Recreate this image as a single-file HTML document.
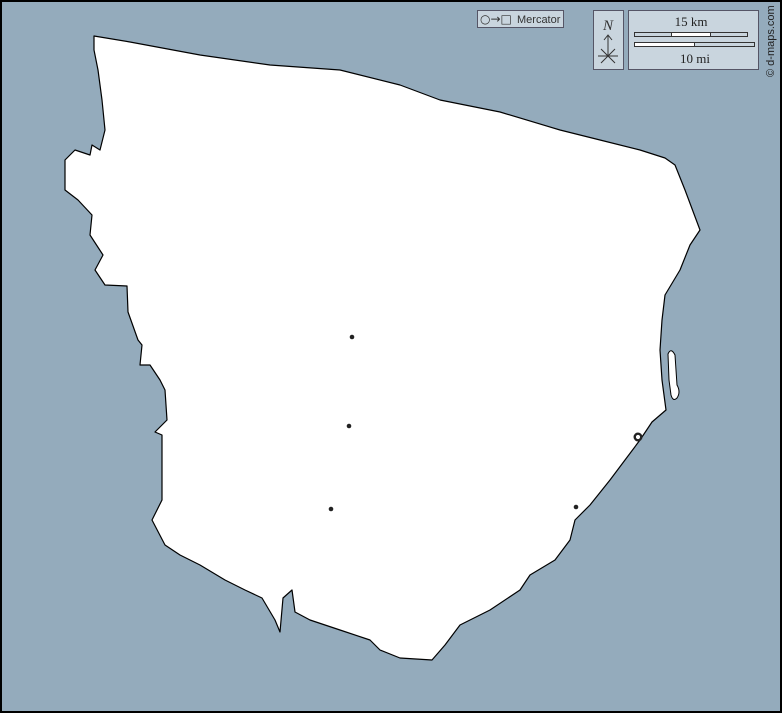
<!DOCTYPE html>
<html><head><style>
html,body{margin:0;padding:0;width:782px;height:713px;overflow:hidden;background:#94abbc}
</style></head><body>
<svg width="782" height="713" viewBox="0 0 782 713" xmlns="http://www.w3.org/2000/svg" style="position:absolute;left:0;top:0">
<rect x="1" y="1" width="780" height="711" fill="#94abbc" stroke="#000" stroke-width="2"/>
<polygon fill="#fff" stroke="#000" stroke-width="1.2" stroke-linejoin="round" points="94,36 130,42 200,55 270,65 340,70 400,85 440,100 500,112 560,130 600,140 640,150 665,158 675,165 685,190 700,230 690,245 680,270 665,295 662,320 660,350 662,380 666,410 652,422 640,440 625,460 610,480 590,505 575,520 570,540 555,560 530,575 520,590 490,610 460,625 445,645 432,660 400,658 380,650 370,640 340,630 310,620 295,612 292,590 283,598 280,632 275,620 262,598 245,590 225,580 200,565 180,555 165,545 152,520 162,500 162,435 155,432 167,420 165,390 160,380 150,365 140,365 142,345 138,340 128,312 127,286 105,285 95,270 103,255 90,235 92,215 78,200 65,190 65,160 75,150 90,155 92,145 100,150 105,130 102,100 98,70 94,50"/>
<path d="M668,354 Q671,347 675,355 L677,385 Q681,392 677,398 Q673,402 671,395 L669,380 Z" fill="#fff" stroke="#000" stroke-width="1"/>
<g fill="#222">
<circle cx="352" cy="337" r="2.3"/><circle cx="349" cy="426" r="2.3"/><circle cx="331" cy="509" r="2.3"/><circle cx="576" cy="507" r="2.3"/>
</g>
<circle cx="638" cy="437" r="3.3" fill="#fff" stroke="#222" stroke-width="2.4"/>
<rect x="477.5" y="10.5" width="86" height="17" fill="#c9d5de" stroke="#556"/>
<text x="480" y="23" font-family="DejaVu Sans,Liberation Sans,sans-serif" font-size="12" fill="#333">○→□</text>
<text x="517" y="23" font-family="Liberation Sans,sans-serif" font-size="11" fill="#333">Mercator</text>
<rect x="593.5" y="10.5" width="30" height="59" fill="#c9d5de" stroke="#556"/>
<text x="608" y="30" text-anchor="middle" font-family="Liberation Serif,serif" font-style="italic" font-size="15" fill="#333">N</text>
<path d="M608,56 V35 M604,40 L608,35 L612,40 M598,56 H618 M601,49 L615,63 M615,49 L601,63" stroke="#333" fill="none" stroke-width="1"/>
<rect x="628.5" y="10.5" width="130" height="59" fill="#c9d5de" stroke="#556"/>
<text x="691" y="26" text-anchor="middle" font-family="Liberation Serif,serif" font-size="13" fill="#222">15 km</text>
<rect x="634.5" y="32.5" width="113" height="4" fill="#fff" stroke="#333"/>
<rect x="634.5" y="32.5" width="37" height="4" fill="#c9d5de" stroke="#333"/>
<rect x="710.5" y="32.5" width="37" height="4" fill="#c9d5de" stroke="#333"/>
<rect x="634.5" y="42.5" width="120" height="4" fill="#fff" stroke="#333"/>
<rect x="694.5" y="42.5" width="60" height="4" fill="#c9d5de" stroke="#333"/>
<text x="695" y="63" text-anchor="middle" font-family="Liberation Serif,serif" font-size="13" fill="#222">10 mi</text>
<text transform="translate(774,77) rotate(-90)" font-family="Liberation Sans,sans-serif" font-size="11" fill="#222">© d-maps.com</text>
</svg>
</body></html>
